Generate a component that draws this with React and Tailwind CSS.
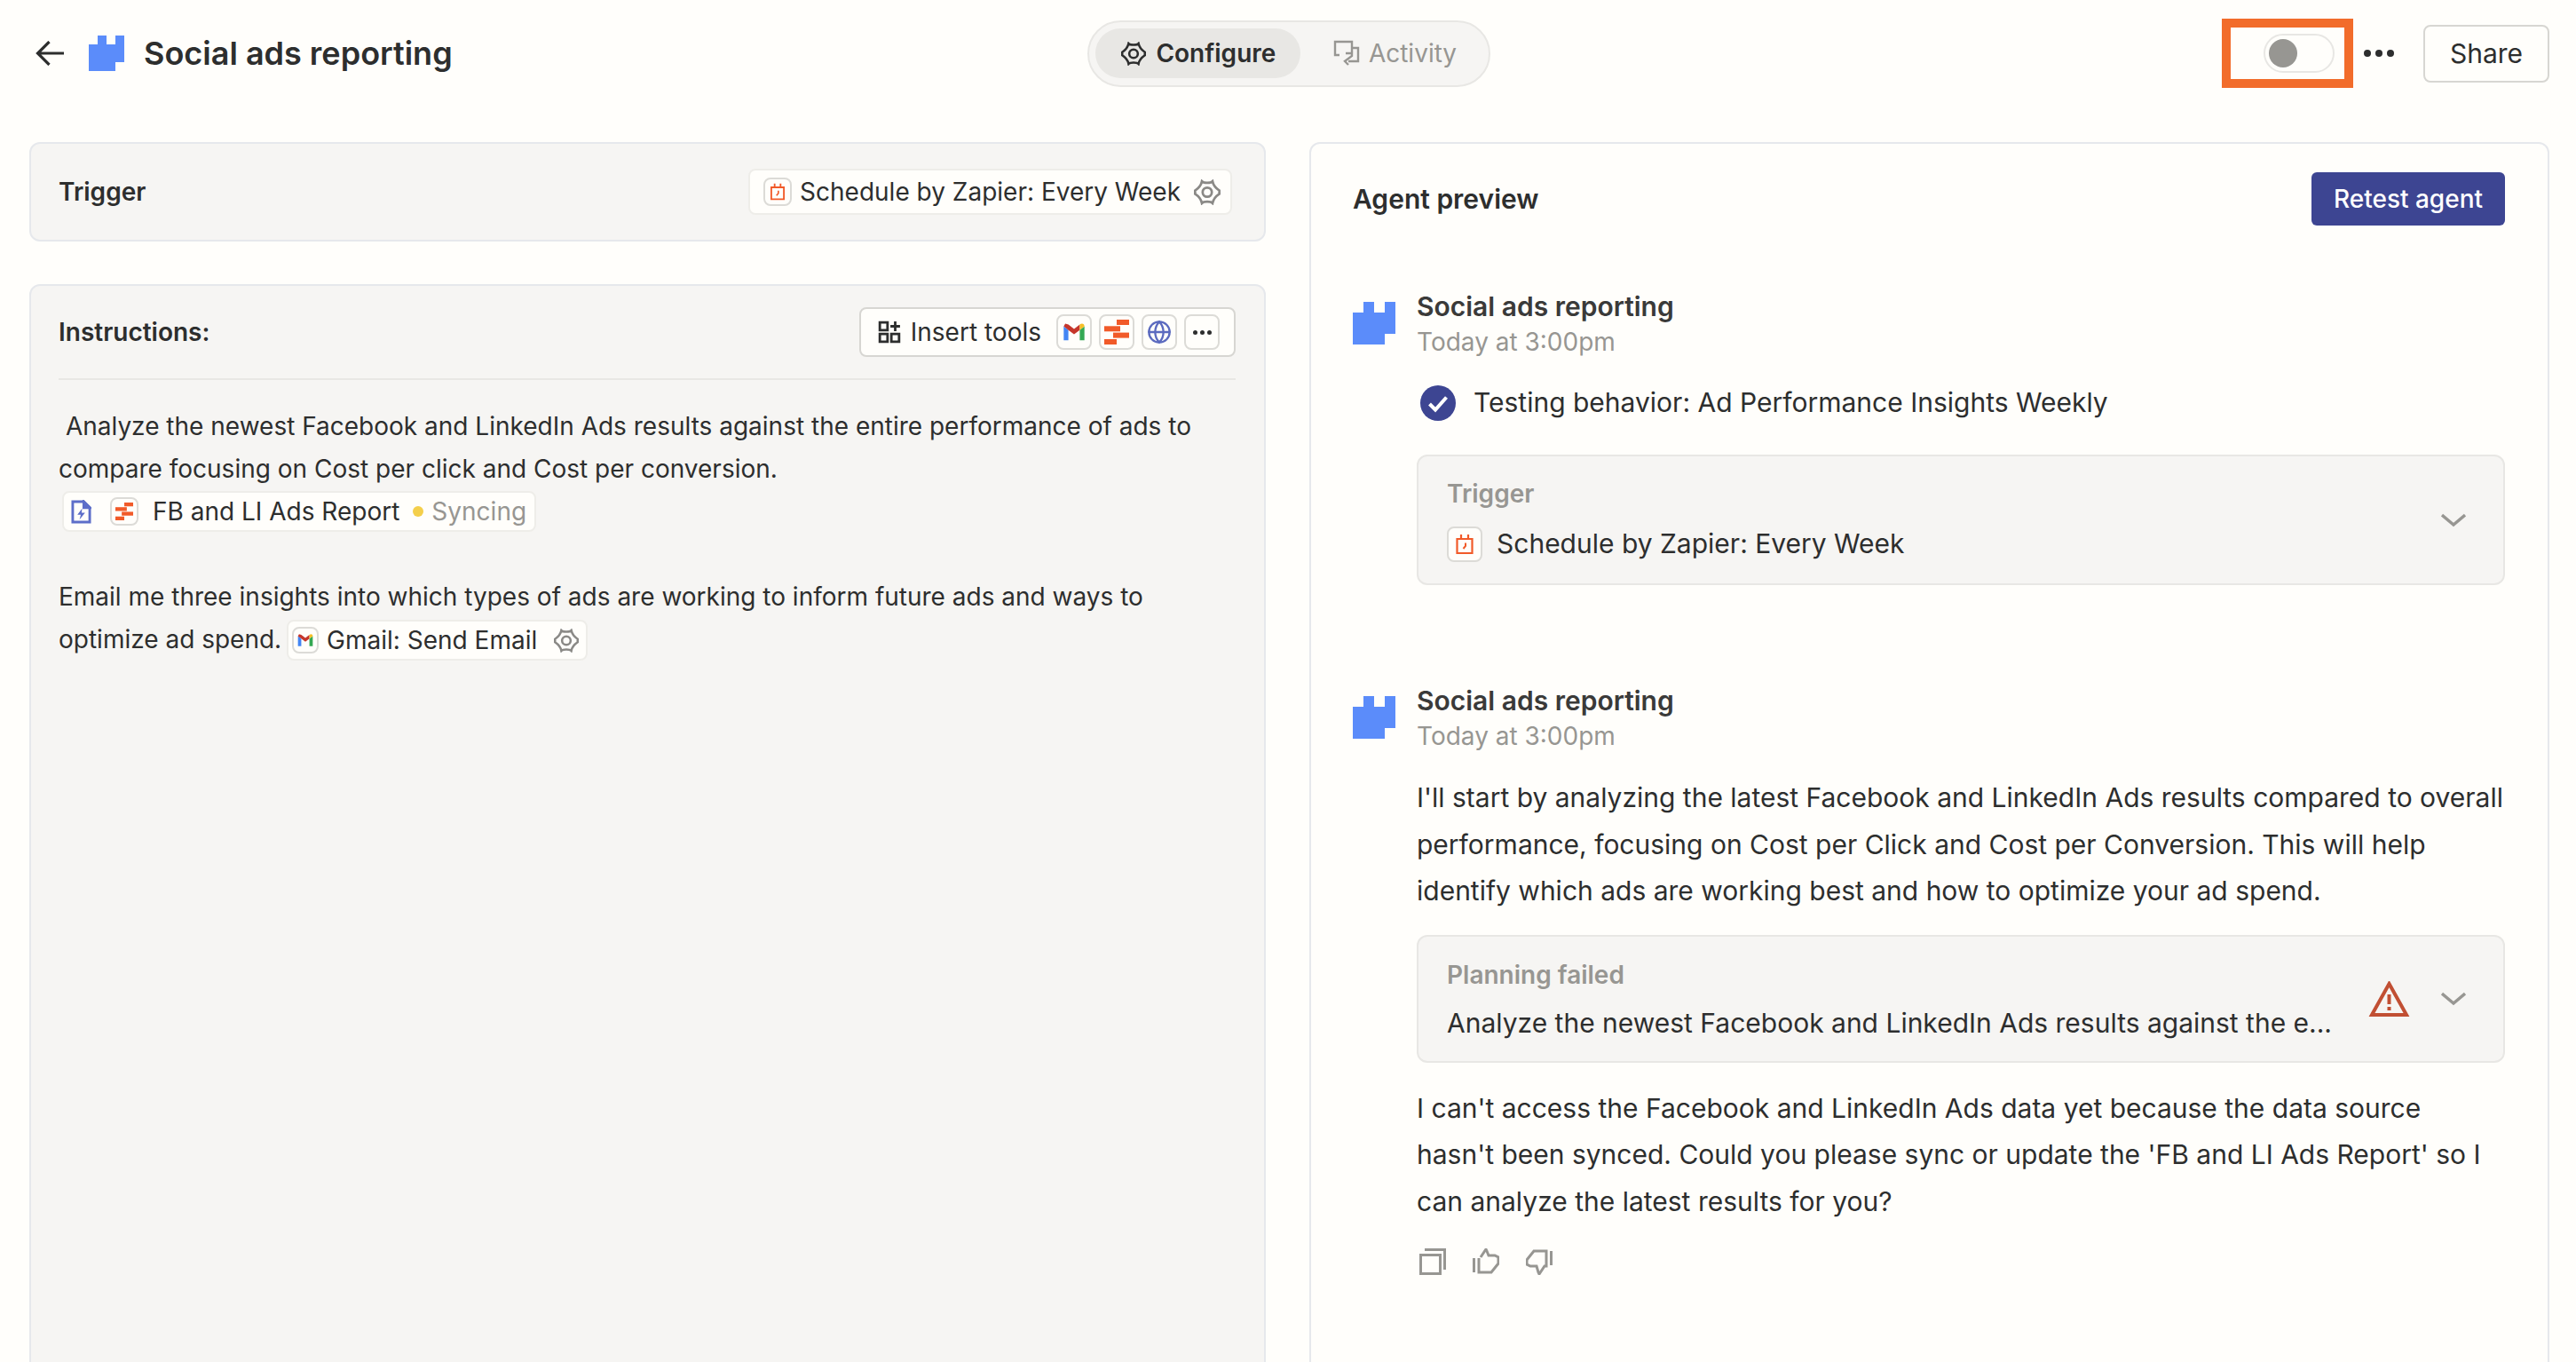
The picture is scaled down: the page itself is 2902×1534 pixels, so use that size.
import { Globe } from "lucide-react";

const Logo = ({ className }) => (
  <svg viewBox="0 0 40 40" className={className} fill="#5b8cfa">
    <path d="M0 10H10V0H20V10H30V0H40V30H30V40H0Z" />
  </svg>
);

const Gear = ({ className }) => (
  <svg viewBox="1 1.5 22 21" fill="none" stroke="currentColor" strokeWidth="2" className={className}>
    <circle cx="12" cy="12" r="3.8" />
    <path d="M7.6 3C9 4.6 15 4.6 16.4 3C17 6 19 8.6 22 10.6V13.4C19 15.4 17 18 16.4 21C15 19.4 9 19.4 7.6 21C7 18 5 15.4 2 13.4V10.6C5 8.6 7 6 7.6 3Z" />
  </svg>
);

const Calendar = ({ className }) => (
  <svg viewBox="0 0 24 24" fill="none" stroke="#f15a29" strokeWidth="2.2" className={className}>
    <path d="M3.5 6H20.5V22H3.5Z" />
    <path d="M8 1V7M16 1V7" />
    <path d="M13 10.5V14L10.5 17" strokeWidth="2" />
  </svg>
);

const Gmail = ({ className }) => (
  <svg viewBox="0 0 24 24" className={className}>
    <path d="M2 6.5V20H6.5V10Z" fill="#4285f4" />
    <path d="M17.5 10V20H22V6.5Z" fill="#34a853" />
    <path d="M6.5 10L12 14.2L17.5 10L17.5 4.8L12 9L6.5 4.8L3.5 3.8L2 6.5Z" fill="#c5362b" />
    <path d="M17.5 4.8V10L22 6.5C22 4 19.5 3 17.5 4.8Z" fill="#f6bf26" />
  </svg>
);

const Tables = ({ className }) => (
  <svg viewBox="0 0 28 28" className={className} fill="#f15a29">
    <rect x="14" y="0" width="14" height="6" />
    <rect x="0" y="7.3" width="18" height="6" />
    <rect x="10" y="14.6" width="18" height="6" />
    <rect x="0" y="22" width="14" height="6" />
  </svg>
);

const IconBox = ({ children, className }) => (
  <span className={`flex items-center justify-center rounded-[8px] border-2 border-[#dcdbd7] bg-[#fffefb] ${className}`}>
    {children}
  </span>
);

const Chevron = () => (
  <svg viewBox="0 0 28 16" fill="none" stroke="#979692" strokeWidth="3.4" className="w-[28px] h-[16px]">
    <path d="M1 2L14 13L27 2" />
  </svg>
);

const Message = ({ children }) => (
  <div className="flex gap-[24px]">
    <Logo className="w-[48px] h-[48px] mt-[15px] shrink-0" />
    <div className="flex-1 min-w-0">
      <div className="h-[40px] leading-[40px] font-semibold text-[#3a3a39]">Social ads reporting</div>
      <div className="h-[40px] leading-[40px] text-[28px] text-[#979692]">Today at 3:00pm</div>
      {children}
    </div>
  </div>
);

export default function App() {
  return (
    <div
      className="h-[1534px] overflow-hidden bg-[#fffefb] text-[#2d2e2e] text-[30px]"
      style={{ fontFamily: "Inter, sans-serif" }}
    >
      <header className="h-[120px] grid grid-cols-[1fr_auto_1fr] items-center pl-[32px] pr-[30px]">
        <div className="flex items-center">
          <svg viewBox="0 0 32 28" fill="none" stroke="#2d2e2e" strokeWidth="3.2" className="w-[32px] h-[28px] ml-[8px]">
            <path d="M32 14H3M15.5 1L2.5 14L15.5 27" />
          </svg>
          <Logo className="w-[40px] h-[40px] ml-[28px]" />
          <h1 className="ml-[22px] text-[36px] font-semibold">Social ads reporting</h1>
        </div>

        <div className="flex items-center h-[75px] rounded-full border-2 border-[#e8e7e4] bg-[#f6f5f3] pl-[7px] pr-[36px] text-[28px]">
          <button className="flex items-center gap-[11px] h-[56px] w-[231px] justify-center rounded-full bg-[#e8e7e4] pl-[2px] font-semibold">
            <Gear className="w-[28px] h-[27px]" />
            Configure
          </button>
          <span className="flex items-center gap-[10px] ml-[37px] text-[#979692]">
            <svg viewBox="0 0 30 30" fill="none" stroke="currentColor" strokeWidth="2.4" className="w-[30px] h-[30px]">
              <path d="M7 17H2V2H21V14" />
              <path d="M21 9H28V24H17" />
              <path d="M14 15H21V18L13 24L17 28" />
            </svg>
            Activity
          </span>
        </div>

        <div className="flex items-center justify-end">
          <div className="flex items-center justify-end w-[148px] h-[78px] border-[10px] border-[#f26c2b] pr-[11px]">
            <span className="flex items-center w-[80px] h-[44px] rounded-full border-2 border-[#e8e7e4] pl-[4px]">
              <span className="w-[32px] h-[32px] rounded-full bg-[#979692]" />
            </span>
          </div>
          <span className="flex gap-[5px] ml-[12px]">
            <span className="w-[8px] h-[8px] rounded-full bg-[#2d2e2e]" />
            <span className="w-[8px] h-[8px] rounded-full bg-[#2d2e2e]" />
            <span className="w-[8px] h-[8px] rounded-full bg-[#2d2e2e]" />
          </span>
          <button className="ml-[33px] w-[142px] h-[65px] rounded-[8px] border-2 border-[#d7d6d2]">Share</button>
        </div>
      </header>

      <main className="flex gap-[49px] pt-[40px] pl-[33px] pr-[30px]">
        <div className="w-[1393px] shrink-0 flex flex-col gap-[48px] text-[28px]">
          <section className="h-[112px] flex items-center justify-between rounded-[12px] border-2 border-[#e6e8ec] bg-[#f6f5f3] pl-[31px] pr-[36px]">
            <span className="font-semibold">Trigger</span>
            <div className="flex items-center h-[52px] rounded-[8px] border-2 border-[#eeede9] bg-[#fffefb] pl-[15px] pr-[11px]">
              <IconBox className="w-[32px] h-[32px]">
                <Calendar className="w-[20px] h-[20px]" />
              </IconBox>
              <span className="ml-[9px]">Schedule by Zapier: Every Week</span>
              <Gear className="w-[30px] h-[29px] ml-[15px] text-[#8a8986]" />
            </div>
          </section>

          <section className="h-[1300px] rounded-[12px] border-2 border-[#e6e8ec] bg-[#f6f5f3] pl-[31px] pr-[32px] pt-[24px]">
            <div className="flex items-center justify-between pb-[24px] border-b-2 border-[#e8e7e4]">
              <span className="font-semibold">Instructions:</span>
              <div className="flex items-center h-[56px] rounded-[8px] border-2 border-[#d7d6d2] bg-[#fffefb] pl-[19px] pr-[16px]">
                <svg viewBox="0 0 24 24" fill="none" stroke="#2d2e2e" strokeWidth="2.6" className="w-[26px] h-[26px]">
                  <path d="M2 2H10V10H2ZM2 14H10V22H2ZM14 14H22V22H14ZM18 1V11M13 6H23" />
                </svg>
                <span className="ml-[11px]">Insert tools</span>
                <div className="flex gap-[8px] ml-[17px]">
                  <IconBox className="w-[40px] h-[40px]">
                    <Gmail className="w-[28px] h-[28px]" />
                  </IconBox>
                  <IconBox className="w-[40px] h-[40px]">
                    <Tables className="w-[28px] h-[28px]" />
                  </IconBox>
                  <IconBox className="w-[40px] h-[40px]">
                    <Globe className="w-[28px] h-[28px] text-[#5b6abf]" strokeWidth={2} />
                  </IconBox>
                  <IconBox className="w-[40px] h-[40px]">
                    <span className="flex gap-[3px]">
                      <span className="w-[5px] h-[5px] rounded-full bg-[#2d2e2e]" />
                      <span className="w-[5px] h-[5px] rounded-full bg-[#2d2e2e]" />
                      <span className="w-[5px] h-[5px] rounded-full bg-[#2d2e2e]" />
                    </span>
                  </IconBox>
                </div>
              </div>
            </div>

            <div className="mt-[28px] leading-[48px]">
              <span className="whitespace-pre"> </span>Analyze the newest Facebook and LinkedIn Ads results against the entire performance of ads to compare focusing on Cost per click and Cost per conversion.{" "}
              <span className="inline-flex items-center align-top h-[46px] mt-[1px] ml-[4px] rounded-[8px] border-2 border-[#eeede9] bg-[#fffefb] pl-[8px] pr-[9px]">
                <svg viewBox="0 0 24 28" fill="none" stroke="#5d6ec9" strokeWidth="3" className="w-[23px] h-[27px]">
                  <path d="M2 2H15L22 9V26H2Z" />
                  <path d="M15 2L22 9H15Z" fill="#5d6ec9" />
                  <path d="M13 10L7.5 17.5H11.5L10 23L16.5 15H12.5Z" fill="#5d6ec9" stroke="none" />
                </svg>
                <IconBox className="w-[32px] h-[32px] ml-[21px]">
                  <Tables className="w-[20px] h-[20px]" />
                </IconBox>
                <span className="ml-[16px]">FB and LI Ads Report</span>
                <span className="w-[12px] h-[12px] rounded-full bg-[#f4cf4b] ml-[15px]" />
                <span className="ml-[9px] text-[#979692]">Syncing</span>
              </span>
              <br />
              <br />
              Email me three insights into which types of ads are working to inform future ads and ways to optimize ad spend.{" "}
              <span className="inline-flex items-center align-top h-[46px] mt-[2px] ml-[-2px] rounded-[8px] border-2 border-[#eeede9] bg-[#fffefb] pl-[4px] pr-[8px]">
                <IconBox className="w-[30px] h-[30px]">
                  <Gmail className="w-[20px] h-[20px]" />
                </IconBox>
                <span className="ml-[9px]">Gmail: Send Email</span>
                <Gear className="w-[28px] h-[27px] ml-[19px] text-[#8a8986]" />
              </span>
            </div>
          </section>
        </div>

        <section className="flex-1 min-w-0 h-[1400px] rounded-[12px] border-2 border-[#e6e8ec] pt-[32px] pl-[47px] pr-[48px]">
          <div className="flex items-center justify-between">
            <span className="font-semibold">Agent preview</span>
            <button className="w-[218px] h-[60px] rounded-[6px] bg-[#3d4592] text-white text-[28px] font-medium">Retest agent</button>
          </div>

          <div className="mt-[71px]">
            <Message>
              <div className="flex items-center mt-[26px] pl-[4px]">
                <svg viewBox="0 0 40 40" className="w-[40px] h-[40px]">
                  <circle cx="20" cy="20" r="20" fill="#3d4592" />
                  <path d="M10.5 21L17 27.5L29.5 13.5" fill="none" stroke="white" strokeWidth="4" />
                </svg>
                <span className="ml-[20px]">Testing behavior: Ad Performance Insights Weekly</span>
              </div>
              <div className="flex items-center justify-between h-[147px] mt-[36px] rounded-[12px] border-2 border-[#e8e7e4] bg-[#f6f5f3] pl-[32px] pr-[42px]">
                <div>
                  <div className="font-semibold text-[#979692] leading-[40px] text-[28px]">Trigger</div>
                  <div className="flex items-center mt-[14px]">
                    <IconBox className="w-[40px] h-[40px]">
                      <Calendar className="w-[24px] h-[24px]" />
                    </IconBox>
                    <span className="ml-[16px]">Schedule by Zapier: Every Week</span>
                  </div>
                </div>
                <Chevron />
              </div>
            </Message>
          </div>

          <div className="mt-[110px]">
            <Message>
              <p className="mt-[23px] leading-[52.6px]">
                I'll start by analyzing the latest Facebook and LinkedIn Ads results compared to overall performance, focusing on Cost per Click and Cost per Conversion. This will help identify which ads are working best and how to optimize your ad spend.
              </p>
              <div className="flex items-center h-[144px] mt-[23px] rounded-[12px] border-2 border-[#e8e7e4] bg-[#f6f5f3] pl-[32px] pr-[42px]">
                <div className="flex-1 min-w-0">
                  <div className="font-semibold text-[#979692] leading-[40px] text-[28px]">Planning failed</div>
                  <div className="mt-[14px] leading-[40px] whitespace-nowrap">Analyze the newest Facebook and LinkedIn Ads results against the e...</div>
                </div>
                <svg viewBox="0 0 47 40" className="w-[47px] h-[40px] ml-[42px]" fill="none">
                  <path d="M23.5 3L43 38H4Z" stroke="#c14f33" strokeWidth="4" />
                  <path d="M21.5 15H25.5V26H21.5ZM21.5 29H25.5V33H21.5Z" fill="#c14f33" />
                </svg>
                <span className="ml-[35px]">
                  <Chevron />
                </span>
              </div>
              <p className="mt-[25px] leading-[52.6px]">
                I can't access the Facebook and LinkedIn Ads data yet because the data source hasn't been synced. Could you please sync or update the 'FB and LI Ads Report' so I can analyze the latest results for you?
              </p>
              <div className="flex gap-[30px] mt-[26px] pl-[3px]">
                <svg viewBox="0 0 30 30" fill="none" stroke="#979692" strokeWidth="3" className="w-[30px] h-[30px]">
                  <path d="M1.5 7.5H23.5V28.5H1.5Z" />
                  <path d="M6 1.5H28.5V24" />
                </svg>
                <svg viewBox="0 0 30 30" fill="none" stroke="#979692" strokeWidth="3" className="w-[30px] h-[30px]">
                  <path d="M1.5 11V27" />
                  <path d="M7 11V27H21L29 17V10L25 8H18L16 3L15 1L9 10" />
                </svg>
                <svg viewBox="0 0 30 30" fill="none" stroke="#979692" strokeWidth="3" className="w-[30px] h-[30px]">
                  <path d="M28.5 3V19" />
                  <path d="M23 3H9L1 13V18L5 20H12L14 27L15 29L21 20H23V3Z" />
                </svg>
              </div>
            </Message>
          </div>
        </section>
      </main>
    </div>
  );
}
